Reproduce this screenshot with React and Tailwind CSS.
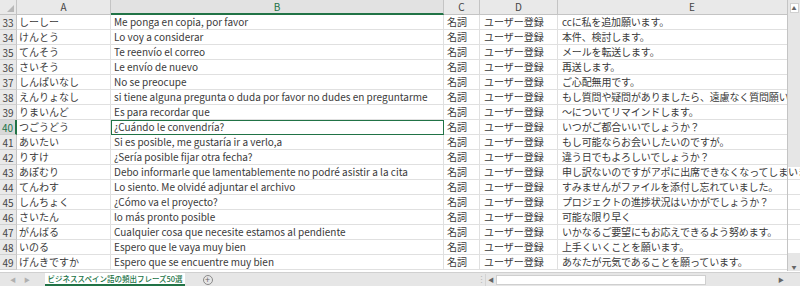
const rows = [
  [33, 'しーしー', 'Me ponga en copia, por favor', 'ccに私を追加願います。'],
  [34, 'けんとう', 'Lo voy a considerar', '本件、検討します。'],
  [35, 'てんそう', 'Te reenvío el correo', 'メールを転送します。'],
  [36, 'さいそう', 'Le envío de nuevo', '再送します。'],
  [37, 'しんぱいなし', 'No se preocupe', 'ご心配無用です。'],
  [38, 'えんりょなし', 'si tiene alguna pregunta o duda por favor no dudes en preguntarme', 'もし質問や疑問がありましたら、遠慮なく質問願います。'],
  [39, 'りまいんど', 'Es para recordar que', '～についてリマインドします。'],
  [40, 'つごうどう', '¿Cuándo le convendría?', 'いつがご都合いいでしょうか？'],
  [41, 'あいたい', 'Si es posible, me gustaría ir a verlo,a', 'もし可能ならお会いしたいのですが。'],
  [42, 'りすけ', '¿Sería posible fijar otra fecha?', '違う日でもよろしいでしょうか？'],
  [43, 'あぽむり', 'Debo informarle que lamentablemente no podré asistir a la cita', '申し訳ないのですがアポに出席できなくなってしまいました。'],
  [44, 'てんわす', 'Lo siento. Me olvidé adjuntar el archivo', 'すみませんがファイルを添付し忘れていました。'],
  [45, 'しんちょく', '¿Cómo va el proyecto?', 'プロジェクトの進捗状況はいかがでしょうか？'],
  [46, 'さいたん', 'lo más pronto posible', '可能な限り早く'],
  [47, 'がんばる', 'Cualquier cosa que necesite estamos al pendiente', 'いかなるご要望にもお応えできるよう努めます。'],
  [48, 'いのる', 'Espero que le vaya muy bien', '上手くいくことを願います。'],
  [49, 'げんきですか', 'Espero que se encuentre muy bien', 'あなたが元気であることを願っています。'],
]

function Row({ n, a, b, e }) {
  const sel = n === 40
  return (
    <div className="flex h-[15px] shrink-0">
      <div
        className={
          'w-[17px] shrink-0 flex items-center justify-center border-b border-b-[#d0d0d0] ' +
          (sel
            ? 'bg-[#d8d8d8] text-[#217346] border-r-2 border-r-[#217346]'
            : 'bg-[#e9e9e9] text-[#444] border-r border-r-[#c4c4c4]')
        }
      >
        {n}
      </div>
      <div className="w-[94px] shrink-0 bg-white border-b border-r border-[#e0e0e0] pl-[2px] leading-[14px] whitespace-nowrap overflow-hidden">{a}</div>
      <div
        className={
          'w-[333px] shrink-0 bg-white border-b border-r border-[#e0e0e0] pl-[3px] leading-[14px] whitespace-nowrap overflow-visible relative z-10 ' +
          (sel ? 'outline outline-[#217346] -outline-offset-1' : '')
        }
      >
        {b}
      </div>
      <div className="w-[36px] shrink-0 bg-white border-b border-r border-[#e0e0e0] pl-[3px] leading-[14px] whitespace-nowrap overflow-hidden">名詞</div>
      <div className="w-[78px] shrink-0 bg-white border-b border-r border-[#e0e0e0] pl-[4px] leading-[14px] whitespace-nowrap overflow-hidden">ユーザー登録</div>
      <div className="w-[300px] shrink-0 bg-white border-b border-[#e0e0e0] pl-[4px] leading-[14px] whitespace-nowrap overflow-hidden tracking-[-0.15px]">{e}</div>
    </div>
  )
}

export default function App() {
  return (
    <div className="w-[800px] h-[286px] overflow-hidden bg-white font-['Noto_Sans_CJK_JP',sans-serif] text-[10px] text-[#3a3a3a] relative flex flex-col">
      {/* column headers */}
      <div className="flex h-[15px] shrink-0 bg-[#e9e9e9] text-[#444]">
        <div className="w-[17px] shrink-0 border-r border-b border-[#c4c4c4] relative">
          <div className="absolute right-[2px] bottom-[2px] w-0 h-0 border-l-[7px] border-l-transparent border-b-[7px] border-b-[#b8b8b8]" />
        </div>
        <div className="w-[94px] shrink-0 border-r border-b border-[#c4c4c4] text-center leading-[14px]">A</div>
        <div className="w-[333px] shrink-0 border-r border-[#c4c4c4] border-b-2 border-b-[#217346] bg-[#e2e2e2] text-[#217346] text-center leading-[13px]">B</div>
        <div className="w-[36px] shrink-0 border-r border-b border-[#c4c4c4] text-center leading-[14px]">C</div>
        <div className="w-[78px] shrink-0 border-r border-b border-[#c4c4c4] text-center leading-[14px]">D</div>
        <div className="w-[300px] shrink-0 border-b border-[#c4c4c4] leading-[14px] pl-[131px]">E</div>
      </div>

      {rows.map(([n, a, b, e]) => (
        <Row key={n} n={n} a={a} b={b} e={e} />
      ))}
      <div className="h-[2px] shrink-0 bg-white" />

      {/* sheet tabs + horizontal scrollbar */}
      <div className="flex-1 flex items-center bg-[#e6e6e6] border-t border-[#d0d0d0] relative z-20">
        <div className="w-[45px] shrink-0 flex items-center gap-[8px] pl-[10px] text-[6px] text-[#b0b0b0]">
          <span>◀</span>
          <span>▶</span>
        </div>
        <div className="h-full w-[140px] shrink-0 bg-white border-b-2 border-[#217346] flex items-center justify-center text-[7.5px] text-[#217346] font-medium leading-none whitespace-nowrap overflow-hidden">
          ビジネススペイン語の頻出フレーズ50選
        </div>
        <div className="w-[45px] shrink-0 flex justify-center">
          <div className="w-[10px] h-[10px] rounded-full border border-[#8a8a8a] flex items-center justify-center text-[9px] leading-none text-[#6a6a6a]">+</div>
        </div>
        <div className="flex-1" />
        <div className="w-[8px] text-[#b8b8b8] text-[9px] leading-none">⋮</div>
        <div className="w-[315px] shrink-0 h-[12px] flex items-center border-l border-[#d4d4d4]">
          <div className="w-[10px] text-[6px] text-[#666] text-center">◀</div>
          <div className="w-[210px] h-[10px] bg-white border border-[#cfcfcf]" />
          <div className="flex-1" />
          <div className="w-[12px] text-[6px] text-[#666] text-center">▶</div>
          <div className="w-[13px]" />
        </div>
      </div>

      {/* vertical scrollbar */}
      <div className="absolute right-0 top-0 w-[13px] h-[271px] flex flex-col z-0">
        <div className="h-[15px] shrink-0 bg-[#e6e6e6] border-l border-[#c4c4c4] flex items-center justify-center">
          <div className="w-[9px] h-[10px] bg-white border border-[#d0d0d0] flex items-center justify-center text-[5px] text-[#666]">▲</div>
        </div>
        <div className="h-[152px] shrink-0 bg-[#e6e6e6] border-l border-[#c4c4c4]" />
        <div className="h-[86px] shrink-0 border-l border-[#c4c4c4]" />
        <div className="flex-1 bg-[#e6e6e6] border-l border-[#c4c4c4] flex items-end justify-center pb-[2px]">
          <div className="text-[5px] text-[#666] leading-none">▼</div>
        </div>
      </div>
    </div>
  )
}
